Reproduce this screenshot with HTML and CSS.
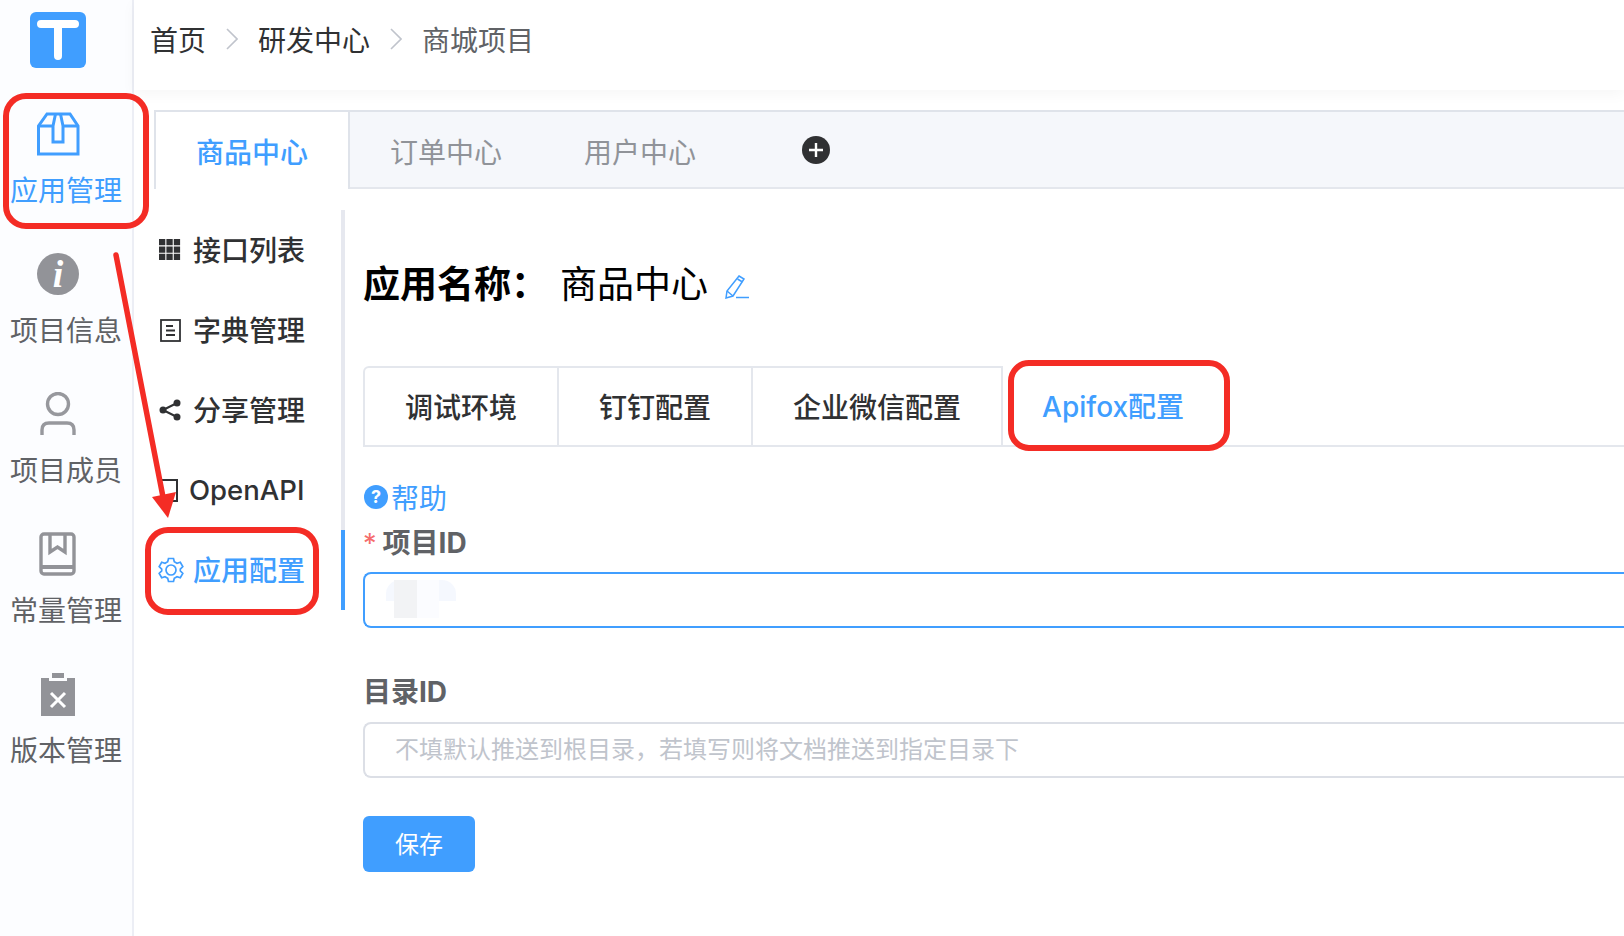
FILE: index.html
```html
<!DOCTYPE html>
<html lang="zh-CN">
<head>
  <meta charset="UTF-8" />
  <meta name="viewport" content="width=device-width, initial-scale=1.0"/>
  <title>应用配置</title>
  <link rel="stylesheet" href="styles.css">
</head>
<body>
  <div class="app">
    <aside class="side">
      <div class="logo">
        <svg width="56" height="56" viewBox="0 0 56 56"><rect width="56" height="56" rx="6" fill="#409eff"/><path d="M11 12H45M28 12V44" stroke="#fff" stroke-width="8" stroke-linecap="round" fill="none"/></svg>
      </div>
      <a class="side-item active">
        <svg class="side-icon" viewBox="0 0 44 44" fill="none" stroke="currentColor" stroke-width="3"><path d="M10 2H33L41 14V42H1.500V14Z"/><path d="M1.500 14H16V30H26V14H41M18.500 2L16 14M23.500 2L26 14"/></svg>
        <span>应用管理</span>
      </a>
      <a class="side-item">
        <svg class="side-icon" viewBox="0 0 44 44"><circle cx="21" cy="22" r="21" fill="#929398"/><text x="21" y="35" class="info-i" text-anchor="middle">i</text></svg>
        <span>项目信息</span>
      </a>
      <a class="side-item">
        <svg class="side-icon" viewBox="0 0 44 44" fill="none" stroke="#97989d" stroke-width="3.4"><circle cx="21" cy="12" r="10.500"/><path d="M5 43V38C5 33 8 31 12 31H30C34 31 37 33 37 38V43"/></svg>
        <span>项目成员</span>
      </a>
      <a class="side-item">
        <svg class="side-icon" viewBox="0 0 44 44" fill="none" stroke="#929398" stroke-width="3.4"><rect x="4" y="2" width="33" height="40" rx="3"/><path d="M13 2V20L20.500 15L28 20V2"/><path d="M4 35H37" stroke-width="4"/></svg>
        <span>常量管理</span>
      </a>
      <a class="side-item">
        <svg class="side-icon" viewBox="0 0 44 44"><path d="M4 6H12V9H30V6H38V44H4Z" fill="#929398"/><rect x="15" y="1" width="12" height="5" fill="#929398"/><path d="M14 21L28 35M28 21L14 35" stroke="#fff" stroke-width="3" fill="none"/></svg>
        <span>版本管理</span>
      </a>
    </aside>

    <main class="main">
      <header class="header">
        <span class="crumb">首页</span>
        <svg class="crumb-sep" width="12" height="22" viewBox="0 0 12 22"><path d="M1 1L11 11L1 21" fill="none" stroke="#c0c4cc" stroke-width="1.600"/></svg>
        <span class="crumb">研发中心</span>
        <svg class="crumb-sep" width="12" height="22" viewBox="0 0 12 22"><path d="M1 1L11 11L1 21" fill="none" stroke="#c0c4cc" stroke-width="1.600"/></svg>
        <span class="crumb last">商城项目</span>
      </header>

      <nav class="app-tabs">
        <a class="app-tab active">商品中心</a>
        <a class="app-tab">订单中心</a>
        <a class="app-tab">用户中心</a>
        <svg class="add-btn" width="28" height="28" viewBox="0 0 28 28"><circle cx="14" cy="14" r="14" fill="#303133"/><path d="M14 7V21M7 14H21" stroke="#fff" stroke-width="2.400"/></svg>
      </nav>

      <div class="body">
        <ul class="menu">
          <li class="menu-item">
            <svg class="menu-icon" viewBox="0 0 24 24" fill="#303133"><path d="M1 1h6.300v6.300H1zM8.400 1h6.300v6.300H8.400zM15.800 1h6.300v6.300h-6.300zM1 8.400h6.300v6.300H1zM8.400 8.400h6.300v6.300H8.400zM15.800 8.400h6.300v6.300h-6.300zM1 15.800h6.300v6.300H1zM8.400 15.800h6.300v6.300H8.400zM15.800 15.800h6.300v6.300h-6.300z"/></svg>
            <span>接口列表</span>
          </li>
          <li class="menu-item">
            <svg class="menu-icon" viewBox="0 0 24 24" fill="none" stroke="#303133" stroke-width="1.800"><rect x="3" y="2" width="19" height="21"/><path d="M8 8H15M8 12.500H17M8 17H17"/></svg>
            <span>字典管理</span>
          </li>
          <li class="menu-item">
            <svg class="menu-icon" viewBox="0 0 24 24" fill="#303133"><circle cx="5" cy="12" r="3.500"/><circle cx="19" cy="5" r="3.500"/><circle cx="19" cy="19" r="3.500"/><path d="M5 12L19 5M5 12L19 19" stroke="#303133" stroke-width="2"/></svg>
            <span>分享管理</span>
          </li>
          <li class="menu-item">
            <svg class="menu-icon" viewBox="0 0 24 24" fill="none" stroke="#303133" stroke-width="2"><path d="M3 2H19V23H3Z"/></svg>
            <span class="latin">OpenAPI</span>
          </li>
          <li class="menu-item active">
            <svg class="menu-icon gear" viewBox="0 0 26 26" fill="none" stroke="#409eff" stroke-width="1.700"><path d="M10.500 1.500H15.500L16.300 4.800L19 6.300L22.300 5.300L24.800 9.700L22.300 12L22.300 14L24.800 16.300L22.300 20.700L19 19.700L16.300 21.200L15.500 24.500H10.500L9.700 21.200L7 19.700L3.700 20.700L1.200 16.300L3.700 14L3.700 12L1.200 9.700L3.700 5.300L7 6.300L9.700 4.800Z"/><circle cx="13" cy="13" r="5"/></svg>
            <span>应用配置</span>
          </li>
        </ul>

        <section class="panel">
          <h1 class="title">
            <strong>应用名称：</strong><span>商品中心</span>
            <svg class="edit" width="24" height="24" viewBox="0 0 24 24" fill="none" stroke="#409eff" stroke-width="1.500"><path d="M14 1L19 4L8 21L1 23L2 16Z"/><path d="M12.500 4L17.500 7M2 16L8 21M11 22.500H24"/></svg>
          </h1>

          <div class="cfg-tabs">
            <a class="cfg-tab">调试环境</a>
            <a class="cfg-tab">钉钉配置</a>
            <a class="cfg-tab">企业微信配置</a>
            <a class="cfg-tab active">Apifox配置</a>
          </div>

          <a class="help">
            <svg width="24" height="24" viewBox="0 0 24 24"><circle cx="12" cy="12" r="12" fill="#409eff"/><text x="12" y="18" class="help-q" text-anchor="middle">?</text></svg>
            <span>帮助</span>
          </a>

          <label class="field-label required">项目ID</label>
          <div class="input focus">
            <span class="smudge"><i></i></span>
          </div>

          <label class="field-label second">目录ID</label>
          <div class="input">
            <span class="placeholder">不填默认推送到根目录，若填写则将文档推送到指定目录下</span>
          </div>

          <button class="save"><span>保存</span></button>
        </section>
      </div>
    </main>
  </div>

  <svg class="marks" width="1624" height="936" viewBox="0 0 1624 936" fill="none" stroke="#f42c25" stroke-width="6">
    <rect x="6" y="96" width="140" height="130" rx="20"/>
    <rect x="148" y="530" width="168" height="82" rx="20"/>
    <rect x="1011" y="363" width="216" height="85" rx="18"/>
    <path d="M116 255L163 497" stroke-linecap="round" stroke-width="5.500"/>
    <path d="M152 497L176 492L168 518Z" fill="#f42c25" stroke="none"/>
  </svg>
</body>
</html>
```

FILE: styles.css
```css
* {
  box-sizing: border-box;
}

body {
  margin: 0;
  width: 1624px;
  height: 936px;
  overflow: hidden;
  position: relative;
  background: #fff;
  color: #303133;
  font-family: Inter, "Noto Sans CJK SC", sans-serif;
}

.app {
  display: flex;
  height: 936px;
}

/* left icon rail */
.side {
  width: 134px;
  flex: none;
  background: #fcfdff;
  border-right: 2px solid #eceef5;
}

.logo {
  height: 100px;
  padding: 12px 0 0 30px;
}

.logo svg {
  display: block;
}

.side-item {
  display: block;
  height: 140px;
  padding: 12px 0 0 10px;
  color: #606266;
  font-size: 28px;
  line-height: 40px;
}

.side-item span {
  display: block;
  margin-top: 15px;
  white-space: nowrap;
}

.side-item.active {
  color: #409eff;
}

.side-icon {
  display: block;
  width: 44px;
  height: 44px;
  margin-left: 27px;
}

.info-i {
  font-family: "Liberation Serif", serif;
  font-style: italic;
  font-weight: 700;
  font-size: 38px;
  fill: #fff;
}

.main {
  flex: 1;
  min-width: 0;
}

/* breadcrumb */
.header {
  height: 90px;
  display: flex;
  align-items: center;
  padding: 0 0 12px 16px;
  box-shadow: 0 4px 14px rgba(0, 0, 0, 0.04);
  font-size: 28px;
}

.crumb {
  color: #303133;
}

.crumb.last {
  color: #606266;
}

.crumb-sep {
  margin: 0 20px;
}

/* top tabs */
.app-tabs {
  display: flex;
  align-items: center;
  height: 79px;
  margin: 20px 0 0 20px;
  background: #f5f7fb;
  border-top: 2px solid #dfe3ea;
  border-bottom: 2px solid #e4e7ed;
  font-size: 28px;
  color: #909399;
}

.app-tab {
  height: 75px;
  padding: 8px 41px 0;
  line-height: 67px;
  white-space: nowrap;
}

.app-tab.active {
  height: 77px;
  padding: 8px 40px 0;
  margin: 0 -1px -2px 0;
  background: #fff;
  color: #409eff;
  font-weight: 500;
  border-left: 2px solid #dfe3ea;
  border-right: 2px solid #dfe3ea;
}

.add-btn {
  margin: 0 0 0 65px;
}

.body {
  display: flex;
  align-items: flex-start;
  margin: 21px 0 0 21px;
}

/* second level menu */
.menu {
  width: 190px;
  flex: none;
  margin: 0;
  padding: 0;
  list-style: none;
  border-right: 4px solid #e6e8ef;
}

.menu-item {
  display: flex;
  align-items: center;
  height: 80px;
  padding-left: 3px;
  font-size: 28px;
  font-weight: 500;
  white-space: nowrap;
}

.menu-item span {
  margin-bottom: 2px;
}

.menu-item.active {
  margin-right: -4px;
  border-right: 4px solid #409eff;
  color: #409eff;
}

.menu-icon {
  width: 24px;
  height: 24px;
  flex: none;
  margin-right: 11px;
}

.menu-icon.gear {
  width: 26px;
  height: 26px;
  margin-right: 9px;
}

.menu-item .latin {
  margin: 0 0 0 -4px;
  font-size: 27.5px;
}

/* right panel */
.panel {
  flex: 1;
  min-width: 0;
  padding-left: 18px;
}

.title {
  display: flex;
  align-items: center;
  height: 50px;
  margin: 50px 0 0;
  padding-bottom: 6px;
  color: #000;
  font-size: 37px;
  font-weight: 400;
}

.title strong {
  width: 197px;
  font-weight: 700;
}

.edit {
  margin: 10px 0 0 17px;
}

.cfg-tabs {
  display: flex;
  height: 81px;
  margin: 56px 0 0;
  border-bottom: 2px solid #e4e7ed;
  font-size: 28px;
  font-weight: 500;
}

.cfg-tab {
  padding: 2px 40px 0;
  line-height: 77px;
  color: #303133;
  border-top: 2px solid #e4e7ed;
  border-right: 2px solid #e4e7ed;
  white-space: nowrap;
}

.cfg-tab:first-child {
  border-left: 2px solid #e4e7ed;
  border-radius: 6px 0 0 0;
}

.cfg-tab.active {
  border: 0;
  padding-left: 39px;
  line-height: 79px;
  color: #409eff;
}

.help {
  display: flex;
  align-items: center;
  height: 40px;
  margin: 30px 0 0 1px;
  font-size: 28px;
  color: #409eff;
}

.help span {
  margin-left: 3px;
}

.help-q {
  font-size: 18px;
  font-weight: 700;
  fill: #fff;
}

.field-label {
  display: block;
  height: 40px;
  margin-top: 4px;
  font-size: 28px;
  font-weight: 700;
  line-height: 44px;
  color: #606266;
}

.field-label.required::before {
  content: "*";
  margin-right: 6px;
  color: #f56c6c;
  font-size: 27px;
  font-weight: 400;
}

.field-label.second {
  margin-top: 44px;
  line-height: 41px;
}

.input {
  display: flex;
  align-items: center;
  height: 56px;
  margin: 11px 0 0;
  padding-left: 30px;
  border: 2px solid #dcdfe6;
  border-right: 0;
  border-radius: 8px 0 0 8px;
  font-size: 24px;
}

.second + .input {
  margin-top: 10px;
}

.input.focus {
  border-color: #409eff;
  padding-left: 21px;
}

.placeholder {
  padding-bottom: 6px;
  color: #c0c4cc;
}

/* blurred out value */
.smudge {
  display: block;
  width: 70px;
  height: 42px;
  margin-top: 2px;
  padding-left: 8px;
  background: linear-gradient(#f5f8fe 0 50%, #fff 50%);
  border-radius: 14px 14px 0 14px;
}

.smudge i {
  display: block;
  width: 23px;
  height: 38px;
  background: #f2f3f5;
  box-shadow: 22px 0 0 #fbfcff;
}

.save {
  display: block;
  width: 112px;
  height: 56px;
  margin-top: 38px;
  padding: 0 0 4px;
  border: 0;
  border-radius: 6px;
  background: #409eff;
  color: #fff;
  font-family: inherit;
  font-size: 24px;
}

/* red annotations drawn on top of the screenshot */
.marks {
  position: absolute;
  left: 0;
  top: 0;
  pointer-events: none;
}
```
